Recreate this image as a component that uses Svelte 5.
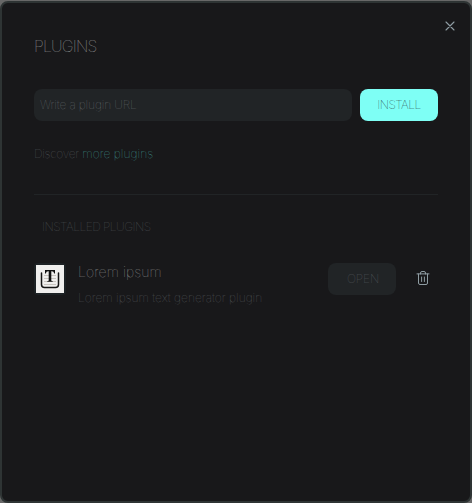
<script>
  const plugins = [{ name: 'Lorem ipsum', description: 'Lorem ipsum text generator plugin' }];
</script>

<div class="backdrop">
  <section class="modal">
    <button class="close" aria-label="Close">
      <svg width="16" height="16" viewBox="0 0 16 16"><path d="M4 4l8 8M12 4l-8 8" /></svg>
    </button>
    <h2>PLUGINS</h2>
    <div class="search">
      <div class="field"><span class="t-field">Write a plugin URL</span></div>
      <button class="install"><span class="t-install">INSTALL</span></button>
    </div>
    <p class="discover"><span class="lead">Discover</span> <a href="#plugins">more plugins</a></p>
    <hr />
    <h3>INSTALLED PLUGINS</h3>
    {#each plugins as plugin}
      <div class="row">
        <div class="icon">
          <svg width="28" height="28" viewBox="0 0 28 28">
            <rect width="28" height="28" fill="#f0efee" />
            <path d="M8 10.5h12M8 13.5h12M8 16.5h12M8 19.5h12" stroke="#c9c5c0" stroke-width="1" />
            <path d="M5.5 8v11.5q0 3 3 3h11q3 0 3-3V8" fill="none" stroke="#151515" stroke-width="1.5" stroke-linecap="round" />
            <path d="M9 5h10v3.6h-.8q-.4-2.4-2.3-2.4h-.6v9q0 .9 1.4.9v.7h-5.4v-.7q1.4 0 1.4-.9v-9h-.6q-1.9 0-2.3 2.4H9z" fill="#111" />
          </svg>
        </div>
        <div class="info">
          <div class="name">{plugin.name}</div>
          <div class="description">{plugin.description}</div>
        </div>
        <button class="open"><span class="t-open">OPEN</span></button>
        <button class="trash" aria-label="Remove">
          <svg width="16" height="16" viewBox="0 0 16 16"><path d="M2 3.9h12M3.5 4v9q0 1.5 1.5 1.5h6q1.5 0 1.5-1.5v-9M5.5 4v-1q0-1.5 1.5-1.5h2q1.5 0 1.5 1.5v1M6.6 7v4.5M9.4 7v4.5" /></svg>
        </button>
      </div>
    {/each}
  </section>
</div>

<style>
  :global(body) { margin: 0; overflow: hidden; }
  * { box-sizing: border-box; }
  .backdrop {
    height: 503px;
    padding: 1px 0 0;
    background: #686868;
    font: 100 12px/16px Inter, "Liberation Sans", sans-serif;
  }
  .modal {
    position: relative;
    width: 472px;
    height: 502px;
    padding: 35px 32px 0;
    border: 2px solid #2e3434;
    border-radius: 8px;
    background: #18181a;
    color: #505456;
  }
  button { display: flex; align-items: center; justify-content: center; padding: 0; border: 0; background: none; font: inherit; }
  span, a, h2, h3, .name, .description { white-space: nowrap; }
  svg { display: block; }
  .close { position: absolute; top: 15px; right: 12px; }
  .close path, .trash path { fill: none; stroke: #8f9da3; stroke-linecap: round; }
  .close path { stroke-width: 1.1; }
  h2 { margin: 0; font-size: 16px; font-weight: 100; line-height: 16px; letter-spacing: -0.8px; color: #acacac; }
  .search { display: flex; gap: 8px; margin-top: 35px; }
  .field { display: flex; align-items: center; width: 318px; height: 32px; padding-left: 6px; border-radius: 8px; background: #212426; color: #6a7072; }
  .t-field { letter-spacing: -0.15px; }
  .install { width: 78px; height: 32px; border-radius: 8px; background: #7efff5; color: #18181a; }
  .t-install { letter-spacing: -0.55px; }
  .discover { margin: 25px 0 0; color: #5a5e60; }
  .lead { letter-spacing: -0.3px; }
  a { color: #44a29d; letter-spacing: 0.05px; text-decoration: none; }
  hr { width: 404px; height: 1px; margin: 32px 0 0; border: 0; background: #212426; }
  h3 { margin: 24px 0 0 8px; font-size: 12px; font-weight: 100; line-height: 16px; letter-spacing: -0.5px; color: #565a5d; }
  .row { display: flex; margin-top: 28px; }
  .row > * { flex-shrink: 0; }
  .icon { width: 32px; height: 32px; padding: 2px; border-radius: 4px; background: #1d2225; }
  .info { width: 250px; padding-left: 12px; }
  .name { font-size: 14px; line-height: 18px; letter-spacing: 0.1px; color: #9c9c9c; }
  .description { margin-top: 9px; color: #5a5e60; }
  .open { width: 68px; height: 32px; margin-left: 12px; border-radius: 8px; background: #212426; color: #5e6366; }
  .t-open { padding-left: 2px; letter-spacing: -0.1px; }
  .trash { width: 32px; height: 32px; margin: -1px 0 0 11px; }
</style>
